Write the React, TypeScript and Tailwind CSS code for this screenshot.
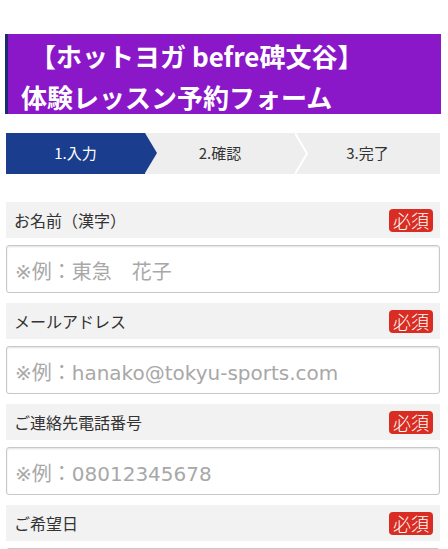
const jp = { fontFamily: '"Noto Sans CJK JP", sans-serif' };

const fields = [
  { label: "お名前（漢字）", placeholder: "※例：東急　花子" },
  { label: "メールアドレス", placeholder: "※例：hanako@tokyu-sports.com" },
  { label: "ご連絡先電話番号", placeholder: "※例：08012345678" },
  { label: "ご希望日", placeholder: "" },
];

const Steps = () => (
  <div className="relative ml-[6px] mr-[8px] flex h-[41px] bg-[#eeeeee] text-[15px] text-[#333]">
    <div className="relative flex w-[139px] items-center justify-center bg-[#1a3e8d] text-white">
      1.入力
      <span className="absolute left-full top-0 h-0 w-0 border-y-[20.5px] border-l-[12px] border-y-transparent border-l-[#1a3e8d]" />
    </div>
    <div className="relative flex w-[150px] items-center justify-center">
      2.確認
      <svg className="absolute left-full top-0" width="14" height="41" viewBox="0 0 14 41">
        <polyline points="0,0 12,20.5 0,41" fill="none" stroke="#ffffff" strokeWidth="2" />
      </svg>
    </div>
    <div className="flex flex-1 items-center justify-center">3.完了</div>
  </div>
);

const Field = ({ label, placeholder }: { label: string; placeholder: string }) => (
  <div className="ml-[6px] mr-[8px] mb-[10px]">
    <div className="flex h-[36px] items-center justify-between bg-[#f2f2f2] pl-2 pr-[7px]">
      <span className="text-[16px] text-[#333]">{label}</span>
      <span className="h-[23px] rounded-[4px] bg-[#d92c22] px-[4px] text-[18px] font-light leading-[23px] text-white">
        必須
      </span>
    </div>
    <input
      className="mt-[7px] h-[48px] w-full rounded-[3px] border border-[#c8c8c8] px-2 pt-[6px] text-[20px] shadow-[inset_0_1px_2px_rgba(0,0,0,0.12)] outline-none placeholder:text-[#a8a8a8]"
      style={{ fontFamily: '"DejaVu Sans", "Noto Sans CJK JP", sans-serif' }}
      placeholder={placeholder}
    />
  </div>
);

export default function App() {
  return (
    <div className="min-h-screen overflow-hidden bg-white" style={jp}>
      <div className="h-[34px]" />
      <h1 className="ml-[5px] mr-[7px] h-[80px] border-l-[3px] border-[#1c2a6e] bg-[#8a18c8] pl-[13px] pt-[1px] text-[26px] font-bold leading-[41px] text-white">
        <span className="block pl-[9px]">【ホットヨガ befre碑文谷】</span>
        <span className="block">体験レッスン予約フォーム</span>
      </h1>
      <div className="h-[19px]" />
      <Steps />
      <div className="h-[28px]" />
      {fields.map((f) => (
        <Field key={f.label} label={f.label} placeholder={f.placeholder} />
      ))}
    </div>
  );
}
